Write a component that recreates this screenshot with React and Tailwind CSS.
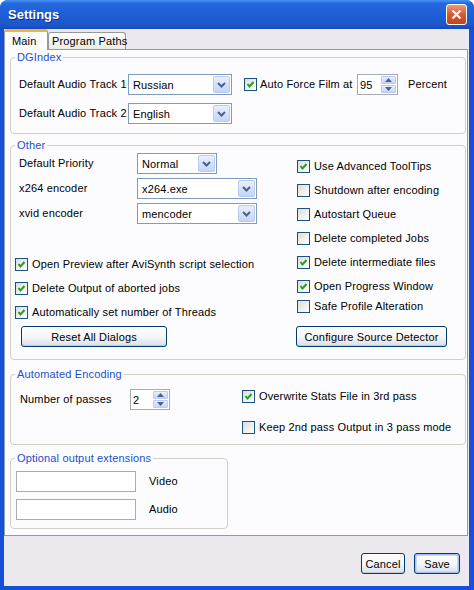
import { clsx } from "clsx";

function Check({ checked, className }) {
  return (
    <span className={clsx("flex h-[13px] w-[13px] shrink-0 items-center justify-center border border-[#1C5180] bg-[linear-gradient(135deg,#DCDCD7,#FFFFFF)]", className)}>
      {checked && (
        <svg width="9" height="9" viewBox="0 0 9 9">
          <path d="M1.5 4 L3.5 6.5 L7.5 2" stroke="#21A121" strokeWidth="2" fill="none" />
        </svg>
      )}
    </span>
  );
}

function CheckRow({ checked, label, className }) {
  return (
    <div className={clsx("flex h-[14px] items-center gap-[4px]", className)}>
      <Check checked={checked} />
      <span className="whitespace-nowrap leading-[14px]">{label}</span>
    </div>
  );
}

function Chevron() {
  return (
    <svg width="9" height="6" viewBox="0 0 9 6">
      <path d="M1 1 L4.5 4.5 L8 1" stroke="#4D6185" strokeWidth="2" fill="none" />
    </svg>
  );
}

function Combo({ value, className }) {
  return (
    <div className={clsx("flex h-[21px] shrink-0 items-stretch border border-[#7F9DB9] bg-white p-px", className)}>
      <span className="flex-1 self-center pl-[3px] leading-[14px]">{value}</span>
      <span className="flex w-[17px] items-center justify-center rounded-[2px] border border-[#B9CBF3] bg-[linear-gradient(#E8EFFD,#C4D5FA)]">
        <Chevron />
      </span>
    </div>
  );
}

function SpinBtn({ up }) {
  return (
    <span className="flex h-[8px] items-center justify-center rounded-[1px] border border-[#B9CBF3] bg-[linear-gradient(#E8EFFD,#C4D5FA)]">
      <svg width="7" height="4" viewBox="0 0 7 4">
        <path d={up ? "M0 4 L3.5 0 L7 4 Z" : "M0 0 L3.5 4 L7 0 Z"} fill="#4D6185" />
      </svg>
    </span>
  );
}

function Spin({ value, className }) {
  return (
    <div className={clsx("flex h-[21px] shrink-0 items-stretch border border-[#A5ACB2] bg-white py-[1px] pl-[2px] pr-px", className)}>
      <span className="flex-1 self-center leading-[14px]">{value}</span>
      <div className="flex w-[15px] flex-col justify-center gap-px">
        <SpinBtn up />
        <SpinBtn />
      </div>
    </div>
  );
}

function XpButton({ children, className, isDefault }) {
  return (
    <div
      className={clsx(
        "flex h-[21px] shrink-0 items-center justify-center whitespace-nowrap rounded-[3px] border border-[#003C74] bg-[linear-gradient(#FFFFFF,#F4F5F8_55%,#D8DEE9)] leading-[14px]",
        isDefault
          ? "shadow-[inset_0_0_0_1px_#A6BEF0,inset_0_0_0_2px_#C8D8FA]"
          : "shadow-[inset_0_-1px_0_#C5CCDA]",
        className
      )}
    >
      {children}
    </div>
  );
}

function Group({ title, className, children }) {
  return (
    <fieldset className={clsx("rounded-[4px] border border-[#D0D0C8]", className)}>
      <legend className="ml-[4px] px-[2px] leading-[14px] text-[#1F4FC8]">{title}</legend>
      {children}
    </fieldset>
  );
}

export default function App() {
  return (
    <div className="flex h-[590px] w-[474px] flex-col rounded-t-[8px] bg-[#1550D8] font-['Liberation_Sans',Arial,sans-serif] text-[11px] tracking-[0.15px] text-black">
      <div className="flex h-[29px] shrink-0 items-center justify-between rounded-t-[8px] bg-[linear-gradient(#4A93F4,#2468DE_12%,#1E5FD6_50%,#1C57CC_85%,#1647BC)] pl-[8px] pr-[7px]">
        <span className="pt-px text-[13px] font-bold tracking-normal text-white [text-shadow:1px_1px_0_#0C2A80]">Settings</span>
        <span className="flex h-[21px] w-[21px] items-center justify-center rounded-[3px] border border-white bg-[linear-gradient(#EC9A7C,#D9592F_50%,#C4431C)]">
          <svg width="11" height="11" viewBox="0 0 11 11">
            <path d="M1.5 1.5 L9.5 9.5 M9.5 1.5 L1.5 9.5" stroke="white" strokeWidth="2.2" />
          </svg>
        </span>
      </div>

      <div className="flex flex-1 flex-col pb-[4px] pl-[4px] pr-[5px]">
        <div className="flex flex-1 flex-col bg-[#EBE9ED]">
          <div className="flex h-[20px] items-end">
            <div className="relative z-10 -mb-px flex h-[21px] w-[44px] items-center rounded-t-[3px] border-x border-t-[3px] border-x-[#919B9C] border-t-[#F2B43B] bg-[#FCFCFE] pl-[7px] leading-[14px]">
              Main
            </div>
            <div className="flex h-[17px] w-[78px] items-center whitespace-nowrap rounded-t-[3px] border-x border-t border-[#919B9C] bg-[linear-gradient(#FFFFFF,#ECEBE6)] pl-[3px] leading-[14px]">
              Program Paths
            </div>
          </div>

          <div className="flex h-[487px] w-[464px] flex-col border border-[#919B9C] bg-[#FCFCFE] pl-[5px]">
            <Group title="DGIndex" className="w-[456px]">
              <div className="flex flex-col gap-[8px] pb-[9px] pl-[8px] pt-[10px]">
                <div className="flex h-[21px] items-center">
                  <span className="w-[109px] whitespace-nowrap">Default Audio Track 1</span>
                  <Combo value="Russian" className="w-[104px]" />
                  <Check checked className="ml-[12px]" />
                  <span className="ml-[3px] w-[97px] whitespace-nowrap">Auto Force Film at</span>
                  <Spin value="95" className="w-[41px]" />
                  <span className="ml-[10px]">Percent</span>
                </div>
                <div className="flex h-[21px] items-center">
                  <span className="w-[109px] whitespace-nowrap">Default Audio Track 2</span>
                  <Combo value="English" className="w-[104px]" />
                </div>
              </div>
            </Group>

            <Group title="Other" className="mt-[4px] w-[456px]">
              <div className="flex pb-[12px]">
                <div className="flex w-[285px] flex-col pl-[4px] pt-px">
                  <div className="flex flex-col gap-[4px] pl-[4px]">
                    <div className="flex h-[21px] items-center">
                      <span className="w-[118px]">Default Priority</span>
                      <Combo value="Normal" className="w-[80px]" />
                    </div>
                    <div className="flex h-[21px] items-center">
                      <span className="w-[118px]">x264 encoder</span>
                      <Combo value="x264.exe" className="w-[120px]" />
                    </div>
                    <div className="flex h-[21px] items-center">
                      <span className="w-[118px]">xvid encoder</span>
                      <Combo value="mencoder" className="w-[120px]" />
                    </div>
                  </div>
                  <div className="mt-[33px] flex flex-col gap-[10px]">
                    <CheckRow checked label="Open Preview after AviSynth script selection" />
                    <CheckRow checked label="Delete Output of aborted jobs" />
                    <CheckRow checked label="Automatically set number of Threads" />
                  </div>
                  <XpButton className="ml-[6px] mt-[7px] w-[146px]">Reset All Dialogs</XpButton>
                </div>
                <div className="flex flex-col pt-[7px]">
                  <div className="flex flex-col gap-[10px] pl-px">
                    <CheckRow checked label="Use Advanced ToolTips" />
                    <CheckRow label="Shutdown after encoding" />
                    <CheckRow label="Autostart Queue" />
                    <CheckRow label="Delete completed Jobs" />
                    <CheckRow checked label="Delete intermediate files" />
                    <CheckRow checked label="Open Progress Window" />
                  </div>
                  <CheckRow label="Safe Profile Alteration" className="ml-px mt-[6px]" />
                  <XpButton className="mt-[13px] w-[151px]">Configure Source Detector</XpButton>
                </div>
              </div>
            </Group>

            <Group title="Automated Encoding" className="mt-[7px] w-[456px]">
              <div className="flex pb-[10px] pt-[8px]">
                <div className="flex w-[231px] items-start pl-[9px]">
                  <div className="flex h-[21px] items-center">
                    <span className="w-[110px]">Number of passes</span>
                    <Spin value="2" className="w-[40px]" />
                  </div>
                </div>
                <div className="flex flex-col gap-[17px]">
                  <CheckRow checked label="Overwrite Stats File in 3rd pass" />
                  <CheckRow label="Keep 2nd pass Output in 3 pass mode" />
                </div>
              </div>
            </Group>

            <Group title="Optional output extensions" className="mt-[6px] w-[218px]">
              <div className="flex flex-col gap-[7px] pb-[8px] pl-[5px] pt-[6px]">
                <div className="flex h-[21px] items-center">
                  <div className="h-[21px] w-[120px] border border-[#A5ACB2] bg-white" />
                  <span className="ml-[13px]">Video</span>
                </div>
                <div className="flex h-[21px] items-center">
                  <div className="h-[21px] w-[120px] border border-[#A5ACB2] bg-white" />
                  <span className="ml-[13px]">Audio</span>
                </div>
              </div>
            </Group>
          </div>

          <div className="flex justify-end gap-[9px] pr-[9px] pt-[17px]">
            <XpButton className="w-[44px]">Cancel</XpButton>
            <XpButton isDefault className="w-[46px]">Save</XpButton>
          </div>
        </div>
      </div>
    </div>
  );
}
